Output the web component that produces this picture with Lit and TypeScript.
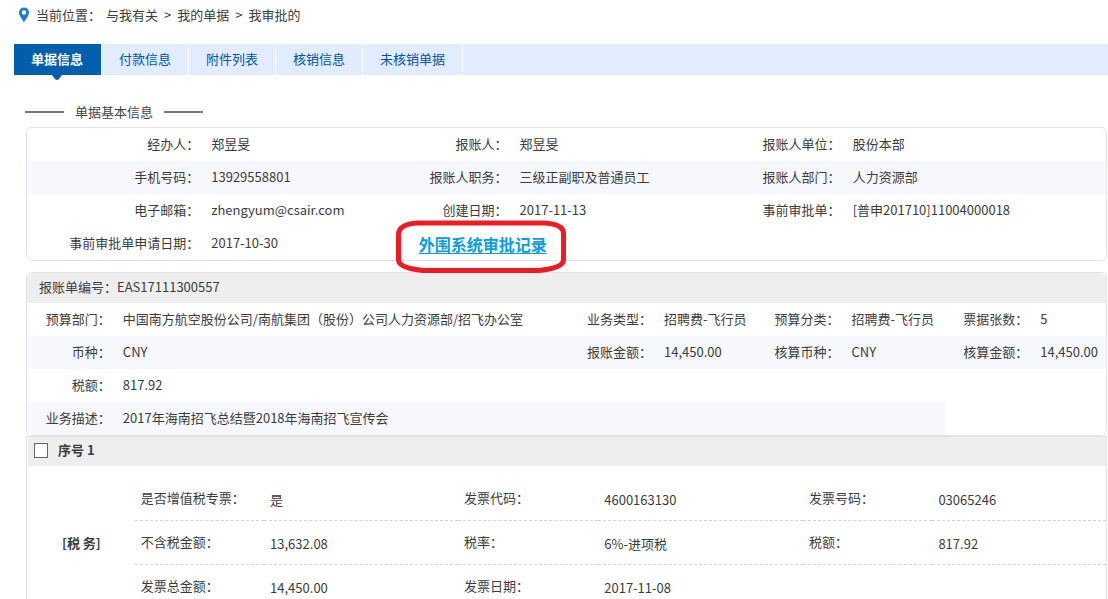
import { LitElement, html, css, nothing } from "lit";
import { customElement, state } from "lit/decorators.js";

type Field = [label: string, value: string];

const TABS = ["单据信息", "付款信息", "附件列表", "核销信息", "未核销单据"];
const CRUMBS = ["与我有关", "我的单据", "我审批的"];

const BASIC: Field[][] = [
  [["经办人：", "郑昱旻"], ["报账人：", "郑昱旻"], ["报账人单位：", "股份本部"]],
  [["手机号码：", "13929558801"], ["报账人职务：", "三级正副职及普通员工"], ["报账人部门：", "人力资源部"]],
  [["电子邮箱：", "zhengyum@csair.com"], ["创建日期：", "2017-11-13"], ["事前审批单：", "[普申201710]11004000018"]],
];

const EXPENSE: Field[][] = [
  [
    ["预算部门：", "中国南方航空股份公司/南航集团（股份）公司人力资源部/招飞办公室"],
    ["业务类型：", "招聘费-飞行员"],
    ["预算分类：", "招聘费-飞行员"],
    ["票据张数：", "5"],
  ],
  [["币种：", "CNY"], ["报账金额：", "14,450.00"], ["核算币种：", "CNY"], ["核算金额：", "14,450.00"]],
];

const TAX: Field[][] = [
  [["是否增值税专票：", "是"], ["发票代码：", "4600163130"], ["发票号码：", "03065246"]],
  [["不含税金额：", "13,632.08"], ["税率：", "6%-进项税"], ["税额：", "817.92"]],
  [["发票总金额：", "14,450.00"], ["发票日期：", "2017-11-08"], ["", ""]],
];

@customElement("app-root")
export class AppRoot extends LitElement {
  @state() private active = 0;

  static styles = css`
    :host {
      display: block;
      height: 100vh;
      overflow-y: auto;
      scrollbar-width: none;
      background: #fff;
      color: #3c3c3c;
      font: 13px/20px "Noto Sans CJK SC", sans-serif;
    }
    .crumbs {
      display: flex;
      align-items: center;
      gap: 6px;
      height: 30px;
      padding-left: 18px;
    }
    .crumbs a { color: inherit; text-decoration: none; }
    .pin { width: 12px; height: 16px; }
    .here { margin-right: -1px; }
    .tabs {
      display: flex;
      height: 31px;
      margin: 14px 0 0 14px;
      background: #e1ecff;
    }
    .tab {
      position: relative;
      padding: 0 17px 2px;
      border: 0;
      border-right: 1px solid #fff;
      background: none;
      color: #0054a6;
      font: inherit;
      cursor: pointer;
    }
    .tab.on {
      padding-right: 18px;
      background: #005eac;
      background-clip: padding-box;
      color: #fff;
      font-weight: 700;
    }
    .caret {
      position: absolute;
      top: 100%;
      left: 50%;
      width: 10px;
      height: 5px;
      margin-left: -6px;
      fill: #005eac;
    }
    .title {
      display: flex;
      align-items: center;
      gap: 11px;
      margin: 27px 0 5px 25px;
      color: #444;
      font-size: 13px;
      font-weight: 400;
    }
    .title::before, .title::after {
      content: "";
      width: 39px;
      height: 2px;
      background: #777;
    }
    .panel {
      margin: 0 1px 11px 26px;
      padding-left: 1px;
      border: 1px solid #e3e3e5;
      border-radius: 6px;
    }
    .panel.joined { margin-bottom: 0; }
    .panel.square { border-radius: 0; }
    table {
      width: 100%;
      border-collapse: collapse;
      table-layout: fixed;
    }
    th, td {
      height: 31px;
      padding: 0 0 2px;
      font-weight: 400;
      text-align: left;
      white-space: nowrap;
    }
    .info th { padding-right: 12px; text-align: right; }
    .stripe > * { background: #f6f8fd; }
    .w17 { width: 17%; }
    .w16 { width: 16%; }
    .w13 { width: 12.6%; }
    .w19 { width: 18.9%; }
    .w12 { width: 12%; }
    .n9 { width: 8.8%; }
    .n41 { width: 41.5%; }
    .n8 { width: 8.7%; }
    .t10 { width: 9.9%; }
    .t12 { width: 12%; }
    .t18 { width: 18%; }
    .t13 { width: 13%; }
    .t19 { width: 19%; }
    .head {
      display: flex;
      align-items: center;
      height: 30px;
      margin-left: -1px;
      padding: 0 12px 3px;
      box-sizing: border-box;
      background: #eee;
      border-radius: 5px 5px 0 0;
    }
    .item {
      display: flex;
      align-items: center;
      gap: 10px;
      height: 29px;
      padding: 0 6px 3px;
      box-sizing: border-box;
      background: #eee;
      font-weight: 700;
    }
    .box {
      appearance: none;
      width: 14px;
      height: 15px;
      margin: 0;
      border: 1px solid #666;
      background: #fff;
    }
    .box:checked { box-shadow: inset 0 0 0 3px #fff; background: #005eac; }
    .info .record { padding: 2px 0 0 35px; }
    .mark { position: relative; display: inline-block; }
    .mark a {
      color: #0a9be0;
      font-size: 16px;
      font-weight: 700;
      line-height: 20px;
      text-underline-offset: 2px;
    }
    .ring {
      position: absolute;
      left: -23px;
      top: -14px;
      width: 170px;
      height: 53px;
      fill: none;
      stroke: #ed1c24;
      stroke-width: 5;
      pointer-events: none;
    }
    .tax { margin-top: 11px; }
    .tax th, .tax td {
      height: 41px;
      padding: 0 0 2px 6px;
      border-bottom: 1px dashed #d4d4d4;
    }
    .tax td { padding: 2px 0 0 6px; }
    .tax .group {
      padding: 0;
      border: 0;
      font-weight: 700;
      text-align: center;
    }
  `;

  private cells(row: Field[]) {
    return row.map(([label, value]) => html`<th scope="row">${label}</th><td>${value}</td>`);
  }

  render() {
    return html`
      <nav class="crumbs">
        <svg class="pin" viewBox="0 0 11 16">
          <path fill="#1a7ad9" fill-rule="evenodd" d="M5.5 0.5A5 5 0 0 0 .5 5.5C.5 9 4 12 5.500 15.500 7 12 10.500 9 10.500 5.500A5 5 0 0 0 5.500 .5ZM5.500 3.300a2.200 2.200 0 1 1 0 4.400a2.200 2.200 0 0 1 0-4.400Z" />
        </svg>
        <span class="here">当前位置：</span>
        ${CRUMBS.map((c, i) => html`${i ? html`<span>&gt;</span>` : nothing}<a href="#">${c}</a>`)}
      </nav>

      <div class="tabs" role="tablist">
        ${TABS.map(
          (t, i) => html`<button
            class="tab ${i === this.active ? "on" : ""}"
            role="tab"
            aria-selected=${i === this.active}
            @click=${() => (this.active = i)}
          >${t}${i === this.active
            ? html`<svg class="caret" viewBox="0 0 10 5"><path d="M0 0H10L7 4Q5 6 3 4Z" /></svg>`
            : nothing}</button>`
        )}
      </div>

      <h2 class="title">单据基本信息</h2>

      <section class="panel">
        <table class="info">
          <colgroup>
            <col class="w17" /><col class="w16" /><col class="w13" /><col class="w19" /><col class="w12" /><col />
          </colgroup>
          <tbody>
            ${BASIC.map((r, i) => html`<tr class=${i % 2 ? "stripe" : ""}>${this.cells(r)}</tr>`)}
            <tr>
              <th scope="row">事前审批单申请日期：</th>
              <td>2017-10-30</td>
              <td class="record" colspan="4">
                <span class="mark">
                  <a href="#">外围系统审批记录</a>
                  <svg class="ring" viewBox="0 0 170 53">
                    <path d="M22 3H148Q167 4 167.500 13V40Q167 48 143 50.500H27Q3 48 2.500 40V14Q3 4 22 3Z" />
                  </svg>
                </span>
              </td>
            </tr>
          </tbody>
        </table>
      </section>

      <section class="panel joined">
        <div class="head">报账单编号：EAS17111300557</div>
        <table class="info">
          <colgroup>
            <col class="n9" /><col class="n41" /><col class="n8" /><col class="n8" /><col class="n8" /><col class="n8" /><col class="n9" /><col />
          </colgroup>
          <tbody>
            ${EXPENSE.map((r, i) => html`<tr class=${i % 2 ? "stripe" : ""}>${this.cells(r)}</tr>`)}
            <tr><th scope="row">税额：</th><td colspan="7">817.92</td></tr>
            <tr class="stripe">
              <th scope="row">业务描述：</th>
              <td colspan="5">2017年海南招飞总结暨2018年海南招飞宣传会</td>
            </tr>
          </tbody>
        </table>
      </section>

      <section class="panel joined square">
        <label class="item"><input class="box" type="checkbox" />序号 1</label>
        <table class="tax">
          <colgroup>
            <col class="t10" /><col class="t12" /><col class="t18" /><col class="t13" /><col class="t19" /><col class="t12" /><col />
          </colgroup>
          <tbody>
            ${TAX.map(
              (r, i) => html`<tr>
                ${i ? nothing : html`<th class="group" scope="rowgroup" rowspan="3">[税 务]</th>`}${this.cells(r)}
              </tr>`
            )}
          </tbody>
        </table>
      </section>
    `;
  }
}
